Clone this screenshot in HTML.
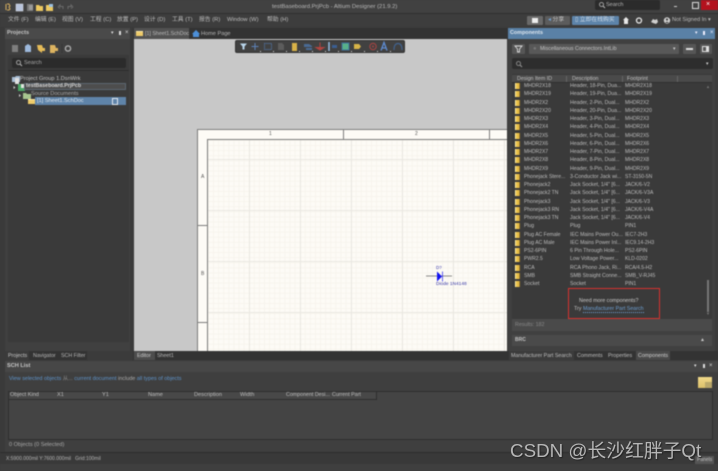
<!DOCTYPE html>
<html><head><meta charset="utf-8">
<style>
html,body{margin:0;padding:0;background:#3b3b3b;}
#p{position:relative;width:718px;height:471px;overflow:hidden;background:#3b3b3b;font-family:"Liberation Sans","Noto Sans CJK SC",sans-serif;color:#c8c8c8;}
#w{position:absolute;left:0;top:0;width:718px;height:471px;filter:blur(.4px);}
.t{position:absolute;white-space:nowrap;line-height:8px;height:8px;font-size:5.6px;color:#bdbdbd;}
.t[style*="left:524px"],.t[style*="left:625px"]{font-size:5.05px;}
.t[style*="left:570px"]{font-size:5.2px;}
.t[style*="top:16px"]{font-size:5.8px;}
.t[style*="top:352px"]{font-size:5.3px;}
.b{position:absolute;}
.r{position:absolute;left:515px;width:5px;height:6px;background:#e8c04a;border-left:1px solid #fff0a8;border-right:1px solid #a8812a;box-sizing:border-box;}
</style></head><body><div id="p"><div id="w">

<!-- title bar -->
<div class="b" style="left:0;top:0;width:718px;height:14px;background:#414141;border-bottom:1px solid #2e2e2e;box-sizing:border-box"></div>
<div class="b" style="left:0;top:14px;width:718px;height:13px;background:#3d3d3d"></div>
<svg class="b" style="left:0;top:0" width="80" height="14">
<path d="M7 4h2l1 2-1 1 1 2-1 1H7M6 4v6" stroke="#d8b060" fill="none"/>
<rect x="16" y="4" width="7" height="7" fill="#b8c4dc" stroke="#e0e4f0" stroke-width=".5"/>
<rect x="27" y="4" width="6" height="7" fill="#777"/><rect x="29" y="5" width="4" height="5" fill="#999"/>
<path d="M36 5h3l1 1h3v5h-7z" fill="#ecc860"/>
<path d="M46 5h3l1 1h3v5h-7z" fill="#ecc860"/><rect x="49" y="4" width="4" height="3" fill="#9cc0e0"/>
<path d="M58 7l2-2v1.500h3v2.500M58 7l2 1.500" stroke="#6a6a6a" fill="none"/>
<path d="M73 7l-2-2v1.500h-3v2.500M73 7l-2 1.500" stroke="#6a6a6a" fill="none"/>
</svg>
<div class="t" style="left:272px;top:3px;font-size:5.900px;color:#b8b8b8">testBaseboard.PrjPcb - Altium Designer (21.9.2)</div>
<div class="b" style="left:595px;top:0;width:65px;height:10px;background:#2b2b2b;border-radius:2px"></div>
<svg class="b" style="left:598px;top:1px" width="8" height="8"><circle cx="3.500" cy="3.500" r="2" fill="none" stroke="#bbb" stroke-width=".8"/><path d="M5 5l2 2" stroke="#bbb"/></svg>
<div class="t" style="left:606px;top:1px;font-size:5.500px;color:#b5b5b5">Search</div>
<div class="b" style="left:674px;top:6px;width:3px;height:1px;background:#ccc"></div>
<div class="b" style="left:692px;top:2px;width:5px;height:5px;border:1px solid #ddd"></div>
<div class="b" style="left:701px;top:0;width:17px;height:10px;background:#b3121d"></div>
<div class="t" style="left:706px;top:1px;color:#fff;font-size:7px">×</div>

<!-- menu -->
<div class="t" style="left:8px;top:16px">文件 (F)</div>
<div class="t" style="left:35px;top:16px">编辑 (E)</div>
<div class="t" style="left:62px;top:16px">视图 (V)</div>
<div class="t" style="left:90px;top:16px">工程 (C)</div>
<div class="t" style="left:117px;top:16px">放置 (P)</div>
<div class="t" style="left:144px;top:16px">设计 (D)</div>
<div class="t" style="left:172px;top:16px">工具 (T)</div>
<div class="t" style="left:199px;top:16px">报告 (R)</div>
<div class="t" style="left:227px;top:16px">Window (W)</div>
<div class="t" style="left:267px;top:16px">帮助 (H)</div>

<div class="b" style="left:527px;top:16px;width:16px;height:9px;background:#6a6a6a;border-radius:1px"></div>
<div class="b" style="left:532px;top:18px;width:6px;height:5px;background:#eee"></div>
<div class="b" style="left:545px;top:16px;width:25px;height:9px;background:#5c5c5c;border-radius:1px"></div>
<div class="t" style="left:548px;top:16px;color:#c5c5c5"><span style="color:#6f9fd0">◂</span> 分享</div>
<div class="b" style="left:572px;top:16px;width:47px;height:9px;background:#5d84aa;border-radius:1px"></div>
<div class="t" style="left:575px;top:16px;color:#d5dfe9">▯ 立即在线购买</div>
<svg class="b" style="left:622px;top:15px" width="50" height="11">
<path d="M4 2L1 5h1v4h4V5h1z" fill="#e8e8e8"/>
<circle cx="17" cy="5.500" r="2.500" fill="none" stroke="#e8e8e8" stroke-width="1.300"/>
<path d="M29 7l2-3 2 1 2-1 1 3-2 2-3-1z" fill="#cfcfcf"/>
<circle cx="45" cy="5.500" r="3.200" fill="#d0d0d0"/><circle cx="45" cy="4.500" r="1.100" fill="#444"/><path d="M43 8q2-2.500 4 0" fill="#444"/>
</svg>
<div class="t" style="left:672px;top:16px;color:#bbb;font-size:5.700px">Not Signed In ▾</div>

<!-- left projects panel -->
<div class="b" style="left:5px;top:28px;width:125px;height:11px;background:#4a4a4a"></div>
<div class="t" style="left:7px;top:29px;font-weight:bold;color:#c4c4c4">Projects</div>
<div class="t" style="left:111px;top:29px;color:#ddd;font-size:5px">▾</div>
<div class="b" style="left:119px;top:31px;width:2px;height:4px;background:#ddd"></div>
<div class="t" style="left:125px;top:29px;color:#ddd;font-size:6px">×</div>
<div class="b" style="left:5px;top:39px;width:125px;height:312px;background:#404040"></div>
<svg class="b" style="left:10px;top:43px" width="65" height="12">
<rect x="2" y="2" width="6" height="7" fill="#7e7e7e"/>
<path d="M15 3l3-2 3 2v6h-6z" fill="#9db9dc"/>
<path d="M27 2h5l1 3h2v3h-3v2l-4-3z" fill="#e5bb58"/>
<path d="M40 2h5l1 3h2v3h-3v2h-5z" fill="#dcb360"/>
<circle cx="58" cy="5.500" r="2.600" fill="none" stroke="#aaa" stroke-width="1.400"/>
<path d="M52 1v9" stroke="#333" stroke-width=".7"/>
</svg>
<div class="b" style="left:8px;top:55px;width:121px;height:287px;background:#3a3a3a"></div>
<div class="b" style="left:12px;top:58px;width:114px;height:10px;background:#2b2b2b;border-radius:2px"></div>
<svg class="b" style="left:15px;top:59px" width="8" height="8"><circle cx="3.500" cy="3.500" r="2" fill="none" stroke="#bbb" stroke-width=".8"/><path d="M5 5l2 2" stroke="#bbb"/></svg>
<div class="t" style="left:24px;top:59px;color:#aaa">Search</div>
<div class="b" style="left:8px;top:70px;width:121px;height:1px;background:#2d2d2d"></div>
<svg class="b" style="left:10px;top:73px" width="40" height="33">
<path d="M2 4h3l1-1h4v6H2z" fill="#a6bcd4"/><rect x="5" y="5" width="4" height="6" fill="#e0e0e0"/>
<path d="M3.500 13l2 1.500-2 1.500z" fill="#ccc"/>
<rect x="8" y="11" width="7" height="7" fill="#4aa765"/><rect x="11" y="11" width="4" height="4" fill="#dfe6dd"/>
<path d="M9 21l2 1.500-2 1.500z" fill="#ccc"/>
<path d="M13 20h3l1 1h4v5h-8z" fill="#a7c48f"/>
</svg>
<div class="t" style="left:20px;top:75px;color:#c0c0c0">Project Group 1.DsnWrk</div>
<div class="b" style="left:24px;top:83px;width:102px;height:7px;background:#4d4d4d;border:1px solid #5c6670;box-sizing:border-box"></div>
<div class="t" style="left:26px;top:82px;color:#d5d5d5;font-weight:bold;font-size:5.300px">testBaseboard.PrjPcb</div>
<div class="t" style="left:31px;top:90px;color:#a8a8a8">Source Documents</div>
<div class="b" style="left:35px;top:97px;width:91px;height:8px;background:#5f84a9"></div>
<div class="b" style="left:28px;top:99px;width:7px;height:5px;background:#eecb6a;border-top:1px solid #fbe9a8;box-sizing:border-box"></div>
<div class="t" style="left:37px;top:97px;color:#dce4ec">[1] Sheet1.SchDoc</div>
<div class="b" style="left:112px;top:98px;width:4px;height:5px;border:1px solid #e0e8f0"></div>
<div class="t" style="left:8px;top:352px;color:#c8c8c8">Projects</div>
<div class="b" style="left:29px;top:351px;width:30px;height:9px;background:#333"></div>
<div class="t" style="left:33px;top:352px;color:#b5b5b5">Navigator</div>
<div class="b" style="left:59px;top:351px;width:28px;height:9px;background:#333"></div>
<div class="t" style="left:61px;top:352px;color:#b5b5b5">SCH Filter</div>

<!-- document -->
<div class="b" style="left:133px;top:28px;width:375px;height:11px;background:#333"></div>
<div class="b" style="left:134px;top:28px;width:55px;height:11px;background:#525252"></div>
<div class="b" style="left:136px;top:31px;width:7px;height:5px;background:#eecb6a;border-top:1px solid #fbe9a8;box-sizing:border-box"></div>
<div class="t" style="left:145px;top:30px;color:#bbb;font-size:5.300px">[1] Sheet1.SchDoc</div>
<svg class="b" style="left:192px;top:29px" width="8" height="9"><path d="M4 1L0 5h1v3h6V5h1z" fill="#4c8fd8"/></svg>
<div class="t" style="left:201px;top:30px;color:#b5b5b5">Home Page</div>
<div class="b" style="left:134px;top:39px;width:373px;height:312px;background:#c8c8c8"></div>

<!-- sheet -->
<div class="b" style="left:197px;top:129px;width:310px;height:222px;background:#fdfbf6;border-left:1px solid #7c7c7c;border-top:1px solid #7c7c7c;box-sizing:border-box"></div>
<div class="b" style="left:207px;top:139px;width:300px;height:212px;border-left:1px solid #7c7c7c;border-top:1px solid #7c7c7c;box-sizing:border-box;background-color:#fdfbf6;background-image:linear-gradient(to right,#eae8e2 1px,transparent 1px),linear-gradient(to bottom,#eae8e2 1px,transparent 1px),linear-gradient(to right,#f7f4ed 1px,transparent 1px),linear-gradient(to bottom,#f7f4ed 1px,transparent 1px);background-size:51px 51px,51px 51px,5.100px 5.100px,5.100px 5.100px;background-position:41px 0,0 19px,0 0,0 0"></div>
<div class="b" style="left:343px;top:129px;width:1px;height:10px;background:#7c7c7c"></div>
<div class="b" style="left:489px;top:129px;width:1px;height:10px;background:#7c7c7c"></div>
<div class="b" style="left:197px;top:225px;width:10px;height:1px;background:#7c7c7c"></div>
<div class="b" style="left:197px;top:322px;width:10px;height:1px;background:#7c7c7c"></div>
<div class="t" style="left:269px;top:130px;color:#555;font-size:5px">1</div>
<div class="t" style="left:415px;top:130px;color:#555;font-size:5px">2</div>
<div class="t" style="left:201px;top:173px;color:#555;font-size:5px">A</div>
<div class="t" style="left:201px;top:270px;color:#555;font-size:5px">B</div>
<svg class="b" style="left:424px;top:270px" width="30" height="14">
<path d="M2 6h26" stroke="#666" stroke-width=".8"/>
<path d="M13 1.500v10L18 6.500z" fill="#1212f0"/>
<path d="M18.500 1.500v10" stroke="#3a3af0" stroke-width=".8"/>
</svg>
<div class="t" style="left:436px;top:264px;color:#4040b0;font-size:4.500px">D?</div>
<div class="t" style="left:436px;top:281px;color:#3a3aa8;font-size:4.800px">Diode 1N4148</div>

<!-- toolbar -->
<div class="b" style="left:235px;top:40px;width:170px;height:13px;background:#414141;border-radius:2px;border:1px solid #333;box-sizing:border-box"></div>
<svg class="b" style="left:235px;top:40px" width="170" height="13">
<path d="M5 3.500h7l-2.500 3v3h-2v-3z" fill="#b8d4ea"/>
<path d="M20 3v7M16.500 6.500h7" stroke="#5d83b8"/>
<rect x="29.500" y="3.500" width="7" height="6" fill="none" stroke="#4f6f9c" stroke-dasharray="1 .5"/>
<path d="M43 3h4l2 2v5h-6z" fill="#5c5c5c"/>
<rect x="57" y="3" width="5" height="8" fill="#d8b248"/>
<path d="M69 4h5l3 2v1h-8zM71 8h6v2h-6z" fill="#4a6a94"/>
<path d="M85 2.500v5M81 7.500h8l-4 2.500z" stroke="#b04440" fill="#b04440"/>
<path d="M94 2v9" stroke="#9cc4ec" stroke-width="1.400"/><rect x="97" y="5" width="5" height="3" fill="#3b5f92"/>
<rect x="107" y="3" width="7" height="7" fill="#58b08a" stroke="#3c6f98"/>
<path d="M119 4h5l2 2.500-2 2.500h-5z" fill="#d8b448"/>
<circle cx="138" cy="6.500" r="3.200" fill="none" stroke="#a44442" stroke-width="1.100"/><circle cx="138" cy="6.500" r="1" fill="#a44442"/>
<path d="M146 10.500l3-8 3 8M147.500 8h3" stroke="#5e8cd2" fill="none" stroke-width="1.300"/>
<path d="M159 10q0-6.500 4-6.500t4 6.500" stroke="#41628e" fill="none" stroke-width="1.200"/>
<g fill="#d8d8d8"><rect x="25" y="11" width="1" height="1"/><rect x="38" y="11" width="1" height="1"/><rect x="51" y="11" width="1" height="1"/><rect x="64" y="11" width="1" height="1"/><rect x="77" y="11" width="1" height="1"/><rect x="90" y="11" width="1" height="1"/><rect x="103" y="11" width="1" height="1"/><rect x="116" y="11" width="1" height="1"/><rect x="129" y="11" width="1" height="1"/><rect x="142" y="11" width="1" height="1"/><rect x="155" y="11" width="1" height="1"/></g>
</svg>

<!-- editor tabs -->
<div class="b" style="left:133px;top:351px;width:375px;height:9px;background:#333"></div>
<div class="b" style="left:134px;top:351px;width:21px;height:9px;background:#4d4d4d"></div>
<div class="t" style="left:137px;top:352px;color:#d0d0d0">Editor</div>
<div class="t" style="left:157px;top:352px;color:#b8b8b8">Sheet1</div>

<!-- components panel -->
<div class="b" style="left:508px;top:28px;width:207px;height:11px;background:#5a81a6"></div>
<div class="t" style="left:510px;top:29px;color:#dbe5ee;font-weight:bold;font-size:5.400px">Components</div>
<div class="t" style="left:695px;top:29px;color:#eef;font-size:5px">▾</div>
<div class="b" style="left:703px;top:31px;width:2px;height:4px;background:#eef"></div>
<div class="t" style="left:710px;top:29px;color:#eef;font-size:6px">×</div>
<div class="b" style="left:508px;top:39px;width:207px;height:312px;background:#404040"></div>
<div class="b" style="left:512px;top:44px;width:13px;height:10px;background:#565656;border-radius:1px"></div>
<svg class="b" style="left:514px;top:45px" width="9" height="8"><path d="M1 1h7L5.500 4v3h-2V4z" fill="none" stroke="#ddd" stroke-width=".9"/></svg>
<div class="b" style="left:529px;top:44px;width:150px;height:10px;background:#585858;border-radius:1px"></div>
<div class="t" style="left:533px;top:45px;color:#777;font-size:6px">●</div>
<div class="t" style="left:540px;top:45px;color:#c5c5c5;font-size:5.300px">Miscellaneous Connectors.IntLib</div>
<div class="t" style="left:673px;top:45px;color:#ccc;font-size:5px">▾</div>
<div class="b" style="left:683px;top:44px;width:13px;height:10px;background:#565656;border-radius:1px"></div>
<div class="b" style="left:686px;top:48px;width:7px;height:2px;background:#ddd"></div>
<div class="b" style="left:700px;top:44px;width:12px;height:10px;background:#565656;border-radius:1px"></div>
<div class="b" style="left:702px;top:46px;width:7px;height:6px;border:1px solid #e0e0e0;box-sizing:border-box;border-right-width:3px"></div>
<div class="b" style="left:512px;top:58px;width:201px;height:11px;background:#2d2d2d;border-radius:2px"></div>
<svg class="b" style="left:515px;top:60px" width="8" height="8"><circle cx="3.500" cy="3.500" r="2" fill="none" stroke="#999" stroke-width=".8"/><path d="M5 5l2 2" stroke="#999"/></svg>
<div class="t" style="left:706px;top:60px;color:#ccc;font-size:5px">▾</div>
<div class="b" style="left:512px;top:74px;width:200px;height:245px;background:#3a3a3a"></div>
<div class="b" style="left:512px;top:75px;width:200px;height:8px;background:#4a4a4a;border-bottom:1px solid #2f2f2f;box-sizing:border-box"></div>
<div class="t" style="left:517px;top:75px;color:#c0c0c0;font-size:5.300px">Design Item ID</div>
<div class="t" style="left:572px;top:75px;color:#c0c0c0;font-size:5.300px">Description</div>
<div class="t" style="left:627px;top:75px;color:#c0c0c0;font-size:5.300px">Footprint</div>
<div class="b" style="left:566px;top:76px;width:1px;height:6px;background:#666"></div>
<div class="b" style="left:622px;top:76px;width:1px;height:6px;background:#666"></div>
<div class="b" style="left:677px;top:76px;width:1px;height:6px;background:#666"></div>

<div class="r" style="top:83px"></div><div class="t" style="left:524px;top:82px">MHDR2X18</div><div class="t" style="left:570px;top:82px">Header, 18-Pin, Dua...</div><div class="t" style="left:625px;top:82px">MHDR2X18</div>
<div class="r" style="top:91px"></div><div class="t" style="left:524px;top:90px">MHDR2X19</div><div class="t" style="left:570px;top:90px">Header, 19-Pin, Dua...</div><div class="t" style="left:625px;top:90px">MHDR2X19</div>
<div class="r" style="top:100px"></div><div class="t" style="left:524px;top:99px">MHDR2X2</div><div class="t" style="left:570px;top:99px">Header, 2-Pin, Dual...</div><div class="t" style="left:625px;top:99px">MHDR2X2</div>
<div class="r" style="top:108px"></div><div class="t" style="left:524px;top:107px">MHDR2X20</div><div class="t" style="left:570px;top:107px">Header, 20-Pin, Dua...</div><div class="t" style="left:625px;top:107px">MHDR2X20</div>
<div class="r" style="top:116px"></div><div class="t" style="left:524px;top:115px">MHDR2X3</div><div class="t" style="left:570px;top:115px">Header, 3-Pin, Dual...</div><div class="t" style="left:625px;top:115px">MHDR2X3</div>
<div class="r" style="top:124px"></div><div class="t" style="left:524px;top:123px">MHDR2X4</div><div class="t" style="left:570px;top:123px">Header, 4-Pin, Dual...</div><div class="t" style="left:625px;top:123px">MHDR2X4</div>
<div class="r" style="top:133px"></div><div class="t" style="left:524px;top:132px">MHDR2X5</div><div class="t" style="left:570px;top:132px">Header, 5-Pin, Dual...</div><div class="t" style="left:625px;top:132px">MHDR2X5</div>
<div class="r" style="top:141px"></div><div class="t" style="left:524px;top:140px">MHDR2X6</div><div class="t" style="left:570px;top:140px">Header, 6-Pin, Dual...</div><div class="t" style="left:625px;top:140px">MHDR2X6</div>
<div class="r" style="top:149px"></div><div class="t" style="left:524px;top:148px">MHDR2X7</div><div class="t" style="left:570px;top:148px">Header, 7-Pin, Dual...</div><div class="t" style="left:625px;top:148px">MHDR2X7</div>
<div class="r" style="top:157px"></div><div class="t" style="left:524px;top:156px">MHDR2X8</div><div class="t" style="left:570px;top:156px">Header, 8-Pin, Dual...</div><div class="t" style="left:625px;top:156px">MHDR2X8</div>
<div class="r" style="top:166px"></div><div class="t" style="left:524px;top:165px">MHDR2X9</div><div class="t" style="left:570px;top:165px">Header, 9-Pin, Dual...</div><div class="t" style="left:625px;top:165px">MHDR2X9</div>
<div class="r" style="top:174px"></div><div class="t" style="left:524px;top:173px">Phonejack Stere...</div><div class="t" style="left:570px;top:173px">3-Conductor Jack wi...</div><div class="t" style="left:625px;top:173px">ST-3150-5N</div>
<div class="r" style="top:182px"></div><div class="t" style="left:524px;top:181px">Phonejack2</div><div class="t" style="left:570px;top:181px">Jack Socket, 1/4" [6...</div><div class="t" style="left:625px;top:181px">JACK/6-V2</div>
<div class="r" style="top:190px"></div><div class="t" style="left:524px;top:189px">Phonejack2 TN</div><div class="t" style="left:570px;top:189px">Jack Socket, 1/4" [6...</div><div class="t" style="left:625px;top:189px">JACK/6-V3A</div>
<div class="r" style="top:199px"></div><div class="t" style="left:524px;top:198px">Phonejack3</div><div class="t" style="left:570px;top:198px">Jack Socket, 1/4" [6...</div><div class="t" style="left:625px;top:198px">JACK/6-V3</div>
<div class="r" style="top:207px"></div><div class="t" style="left:524px;top:206px">Phonejack3 RN</div><div class="t" style="left:570px;top:206px">Jack Socket, 1/4" [6...</div><div class="t" style="left:625px;top:206px">JACK/6-V4A</div>
<div class="r" style="top:215px"></div><div class="t" style="left:524px;top:214px">Phonejack3 TN</div><div class="t" style="left:570px;top:214px">Jack Socket, 1/4" [6...</div><div class="t" style="left:625px;top:214px">JACK/6-V4</div>
<div class="r" style="top:223px"></div><div class="t" style="left:524px;top:222px">Plug</div><div class="t" style="left:570px;top:222px">Plug</div><div class="t" style="left:625px;top:222px">PIN1</div>
<div class="r" style="top:232px"></div><div class="t" style="left:524px;top:231px">Plug AC Female</div><div class="t" style="left:570px;top:231px">IEC Mains Power Ou...</div><div class="t" style="left:625px;top:231px">IEC7-2H3</div>
<div class="r" style="top:240px"></div><div class="t" style="left:524px;top:239px">Plug AC Male</div><div class="t" style="left:570px;top:239px">IEC Mains Power Inl...</div><div class="t" style="left:625px;top:239px">IEC9.14-2H3</div>
<div class="r" style="top:248px"></div><div class="t" style="left:524px;top:247px">PS2-6PIN</div><div class="t" style="left:570px;top:247px">6 Pin Through Hole...</div><div class="t" style="left:625px;top:247px">PS2-6PIN</div>
<div class="r" style="top:256px"></div><div class="t" style="left:524px;top:255px">PWR2.5</div><div class="t" style="left:570px;top:255px">Low Voltage Power...</div><div class="t" style="left:625px;top:255px">KLD-0202</div>
<div class="r" style="top:265px"></div><div class="t" style="left:524px;top:264px">RCA</div><div class="t" style="left:570px;top:264px">RCA Phono Jack, Ri...</div><div class="t" style="left:625px;top:264px">RCA/4.5-H2</div>
<div class="r" style="top:273px"></div><div class="t" style="left:524px;top:272px">SMB</div><div class="t" style="left:570px;top:272px">SMB Straight Conne...</div><div class="t" style="left:625px;top:272px">SMB_V-RJ45</div>
<div class="r" style="top:281px"></div><div class="t" style="left:524px;top:280px">Socket</div><div class="t" style="left:570px;top:280px">Socket</div><div class="t" style="left:625px;top:280px">PIN1</div>

<div class="t" style="left:706px;top:83px;color:#777;font-size:4px">▲</div>
<div class="b" style="left:707px;top:280px;width:2px;height:32px;background:#767676"></div>
<div class="t" style="left:706px;top:310px;color:#777;font-size:4px">▼</div>
<div class="b" style="left:568px;top:288px;width:92px;height:31px;border:1px solid #d8322e;box-sizing:border-box"></div>
<div class="t" style="left:579px;top:297px;color:#c8c8c8;font-size:5.300px">Need more components?</div>
<div class="t" style="left:574px;top:305px;color:#c0c0c0;font-size:5.300px">Try <span style="color:#6d9fd2;border-bottom:1px dotted #6d9fd2">Manufacturer Part Search</span></div>
<div class="b" style="left:512px;top:319px;width:200px;height:12px;background:#4a4a4a"></div>
<div class="t" style="left:515px;top:321px;color:#888;font-size:5.300px">Results: 182</div>
<div class="b" style="left:512px;top:335px;width:200px;height:11px;background:#4a4a4a"></div>
<div class="t" style="left:515px;top:336px;color:#c5c5c5;font-weight:bold;font-size:5px">BRC</div>
<div class="t" style="left:700px;top:336px;color:#ccc;font-size:5px">▲</div>
<div class="b" style="left:508px;top:351px;width:210px;height:9px;background:#333"></div>
<div class="b" style="left:509px;top:351px;width:65px;height:9px;background:#3c3c3c"></div>
<div class="t" style="left:511px;top:352px;color:#bdbdbd">Manufacturer Part Search</div>
<div class="t" style="left:577px;top:352px;color:#bdbdbd">Comments</div>
<div class="t" style="left:608px;top:352px;color:#bdbdbd">Properties</div>
<div class="b" style="left:636px;top:351px;width:34px;height:9px;background:#4a4a4a"></div>
<div class="t" style="left:638px;top:352px;color:#cfcfcf">Components</div>

<!-- SCH list -->
<div class="b" style="left:5px;top:361px;width:713px;height:11px;background:#474747"></div>
<div class="t" style="left:7px;top:362px;color:#c8c8c8;font-weight:bold">SCH List</div>
<div class="t" style="left:694px;top:362px;color:#ddd;font-size:5px">▾</div>
<div class="b" style="left:703px;top:364px;width:2px;height:4px;background:#ddd"></div>
<div class="t" style="left:709px;top:362px;color:#ddd;font-size:6px">×</div>
<div class="b" style="left:5px;top:372px;width:713px;height:80px;background:#3f3f3f"></div>
<div class="t" style="left:9px;top:375px;color:#5e92c8;font-size:5.450px">View selected objects <span style="color:#8a8a8a">从...</span> current document <span style="color:#aaa">include</span> all types of objects</div>
<div class="b" style="left:698px;top:377px;width:14px;height:11px;background:linear-gradient(#f0d98a,#dcc06a)"></div>
<div class="b" style="left:705px;top:382px;width:7px;height:6px;background:#b9a76a"></div>
<div class="b" style="left:8px;top:391px;width:705px;height:49px;background:#444;border:1px solid #2e2e2e;box-sizing:border-box"></div>
<div class="b" style="left:9px;top:392px;width:368px;height:8px;background:#484848;border-right:1px solid #2e2e2e;border-bottom:1px solid #2e2e2e;box-sizing:border-box"></div>
<div class="t" style="left:10px;top:391px">Object Kind</div>
<div class="t" style="left:57px;top:391px">X1</div>
<div class="t" style="left:102px;top:391px">Y1</div>
<div class="t" style="left:148px;top:391px">Name</div>
<div class="t" style="left:194px;top:391px">Description</div>
<div class="t" style="left:240px;top:391px">Width</div>
<div class="t" style="left:286px;top:391px;font-size:5.300px">Component Desi...</div>
<div class="t" style="left:332px;top:391px;font-size:5.300px">Current Part</div>
<div class="t" style="left:9px;top:441px;color:#a8a8a8">0 Objects (0 Selected)</div>
<div class="b" style="left:0;top:452px;width:718px;height:1px;background:#2d2d2d"></div>
<div class="b" style="left:0;top:453px;width:718px;height:11px;background:#393939"></div>
<div class="t" style="left:6px;top:455px;color:#b5b5b5;font-size:5px">X:5900.000mil Y:7600.000mil &nbsp; Grid:100mil</div>
<div class="b" style="left:695px;top:456px;width:19px;height:8px;background:#555"></div>
<div class="t" style="left:697px;top:456px;color:#c0c0c0;font-size:5px">Panels</div>
<div class="b" style="left:0;top:464px;width:718px;height:7px;background:#3f3f3f"></div>
<div class="b" style="left:0;top:28px;width:5px;height:424px;background:#3a3a3a"></div>
</div>
<!-- watermark -->
<div class="t" style="left:510px;top:441px;height:20px;line-height:20px;font-size:18.800px;color:#bdbdbd;text-shadow:1px 1px 1px #222;opacity:.95">CSDN @长沙红胖子Qt</div>
</div></body></html>
